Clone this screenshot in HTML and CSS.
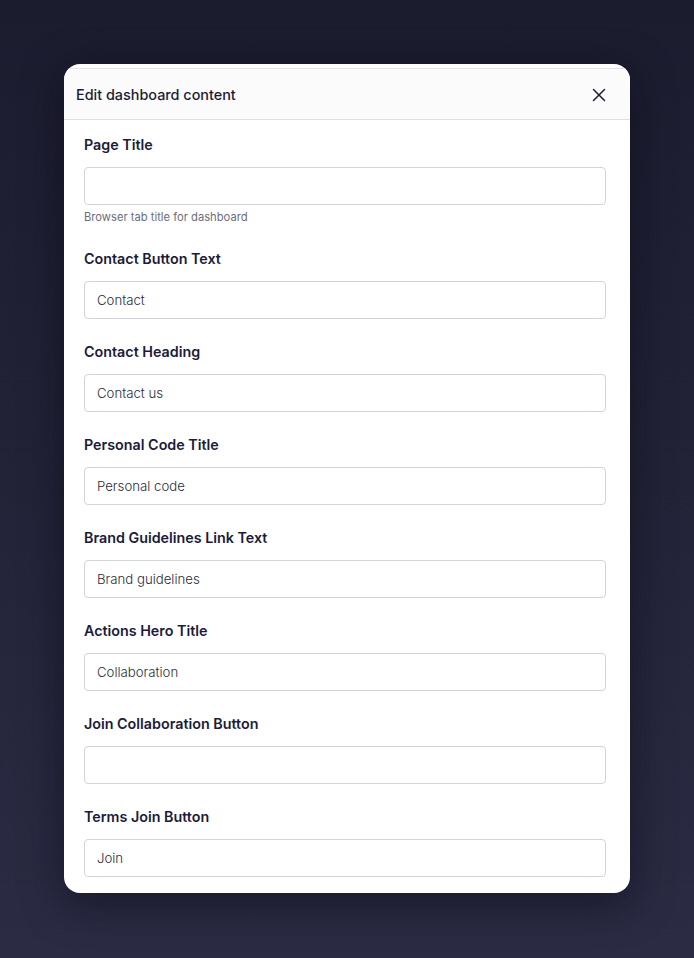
FILE: index.html
```html
<!DOCTYPE html>
<html lang="en">
<head>
<meta charset="utf-8">
<title>Edit dashboard content</title>
<link rel="stylesheet" href="styles.css">
</head>
<body>
<div class="backdrop">
  <div class="modal">
    <div class="modal-header">
      <h2 class="modal-title">Edit dashboard content</h2>
      <button class="close" aria-label="Close">
        <svg width="14" height="14" viewBox="0 0 14 14"><path d="M1.5 1.5 L12.5 12.5 M12.5 1.5 L1.5 12.5" stroke="#1d1d2c" stroke-width="1.5" stroke-linecap="round" fill="none"/></svg>
      </button>
    </div>
    <div class="modal-body">
      <div class="field">
        <label class="label">Page Title</label>
        <input class="input" type="text" value="">
        <div class="help">Browser tab title for dashboard</div>
      </div>
      <div class="field">
        <label class="label">Contact Button Text</label>
        <input class="input" type="text" value="Contact">
      </div>
      <div class="field">
        <label class="label">Contact Heading</label>
        <input class="input" type="text" value="Contact us">
      </div>
      <div class="field">
        <label class="label">Personal Code Title</label>
        <input class="input" type="text" value="Personal code">
      </div>
      <div class="field">
        <label class="label">Brand Guidelines Link Text</label>
        <input class="input" type="text" value="Brand guidelines">
      </div>
      <div class="field">
        <label class="label">Actions Hero Title</label>
        <input class="input" type="text" value="Collaboration">
      </div>
      <div class="field">
        <label class="label">Join Collaboration Button</label>
        <input class="input" type="text" value="">
      </div>
      <div class="field">
        <label class="label">Terms Join Button</label>
        <input class="input" type="text" value="Join">
      </div>
    </div>
  </div>
</div>
</body>
</html>
```
FILE: styles.css
```css
* { box-sizing: border-box; }
html, body { margin: 0; padding: 0; }
body {
  font-family: Inter, Roboto, "Liberation Sans", sans-serif;
  width: 694px;
  height: 958px;
  overflow: hidden;
  background: linear-gradient(180deg, #1c1c2f 0%, #222337 50%, #2b2c44 100%);
}
.backdrop {
  padding: 64px 64px 0 64px;
}
.modal {
  width: 566px;
  background: #ffffff;
  border-radius: 16px;
  padding-top: 4px;
  box-shadow: 0 10px 40px rgba(8, 8, 20, 0.55);
  overflow: hidden;
}
.modal-header {
  display: flex;
  align-items: center;
  justify-content: space-between;
  height: 52px;
  padding: 1px 24px 0 12px;
  background: #fbfbfc;
  border-top: 1px solid #e2e2e8;
  border-bottom: 1px solid #dedee4;
}
.modal-title {
  margin: 0;
  font-size: 14.4px;
  font-weight: 500;
  color: #1a1a36;
}
.close {
  border: 0;
  background: transparent;
  padding: 0;
  width: 14px;
  height: 14px;
  display: flex;
}
.modal-body {
  display: flex;
  flex-direction: column;
  gap: 23px;
  padding: 15px 24px 16px 20px;
}
.field {
  display: flex;
  flex-direction: column;
}
.label {
  font-size: 14.3px;
  line-height: 20px;
  font-weight: 600;
  color: #1b1b3a;
  margin-bottom: 12px;
}
.input {
  height: 38px;
  width: 100%;
  border: 1px solid #d3d3db;
  border-radius: 4px;
  padding: 0 12px;
  font-family: Inter, Roboto, "Liberation Sans", sans-serif;
  font-size: 13.2px;
  font-weight: 300;
  color: #2b2b3b;
  background: #fff;
  outline: none;
}
.help {
  margin-top: 4px;
  font-size: 11.2px;
  line-height: 17px;
  color: #6c6c80;
}
```
